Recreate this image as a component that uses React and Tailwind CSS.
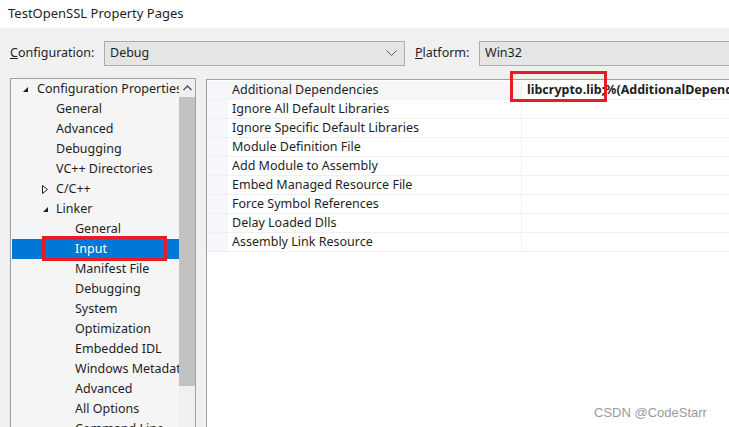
import React from 'react';

const font = { fontFamily: '"Noto Sans", "Noto Sans CJK SC", sans-serif' };

const treeItems = [
  { label: 'Configuration Properties', level: 0, toggle: 'open' },
  { label: 'General', level: 1 },
  { label: 'Advanced', level: 1 },
  { label: 'Debugging', level: 1 },
  { label: 'VC++ Directories', level: 1 },
  { label: 'C/C++', level: 1, toggle: 'closed' },
  { label: 'Linker', level: 1, toggle: 'open' },
  { label: 'General', level: 2 },
  { label: 'Input', level: 2, selected: true },
  { label: 'Manifest File', level: 2 },
  { label: 'Debugging', level: 2 },
  { label: 'System', level: 2 },
  { label: 'Optimization', level: 2 },
  { label: 'Embedded IDL', level: 2 },
  { label: 'Windows Metadata', level: 2 },
  { label: 'Advanced', level: 2 },
  { label: 'All Options', level: 2 },
  { label: 'Command Line', level: 2 },
];

const props = [
  'Additional Dependencies',
  'Ignore All Default Libraries',
  'Ignore Specific Default Libraries',
  'Module Definition File',
  'Add Module to Assembly',
  'Embed Managed Resource File',
  'Force Symbol References',
  'Delay Loaded Dlls',
  'Assembly Link Resource',
];

const textPad = ['pl-[25px]', 'pl-[44px]', 'pl-[63px]'];
const togglePos = ['left-[10px]', 'left-[30px]', 'left-[49px]'];

function Toggle({ kind }) {
  if (kind === 'open') {
    return (
      <svg width="7" height="7" viewBox="0 0 7 7">
        <path d="M6 1 L6 6 L1 6 Z" fill="#1e1e1e" />
      </svg>
    );
  }
  return (
    <svg width="6" height="9" viewBox="0 0 6 9">
      <path d="M0.5 0.5 L5.5 4.5 L0.5 8.5 Z" fill="none" stroke="#1e1e1e" strokeWidth="1" />
    </svg>
  );
}

export default function App() {
  return (
    <div className="relative h-[427px] w-[729px] overflow-hidden bg-[#f0f0f0] text-[12.5px] text-[#1e1e1e]" style={font}>
      {/* Título */}
      <div className="flex h-[28px] items-center bg-white pl-[8px] text-[13px]">TestOpenSSL Property Pages</div>

      {/* Configuração / Plataforma */}
      <div className="mt-[13px] flex h-[25px] items-center">
        <span className="w-[104px] shrink-0 pl-[10px]">
          <u>C</u>onfiguration:
        </span>
        <div className="flex h-[25px] w-[301px] shrink-0 items-center border border-[#adadad] bg-[#e5e5e5] pl-[5px]">
          <span className="flex-1">Debug</span>
          <svg width="11" height="7" viewBox="0 0 11 7" className="mr-[7px]">
            <path d="M0.5 0.5 L5.5 5.5 L10.5 0.5" fill="none" stroke="#5a5a5a" strokeWidth="1" />
          </svg>
        </div>
        <span className="ml-[10px] w-[64px] shrink-0">
          <u>P</u>latform:
        </span>
        <div className="-mr-[2px] flex h-[25px] flex-1 items-center border border-[#adadad] bg-[#e5e5e5] pl-[5px]">
          Win32
        </div>
      </div>

      {/* Conteúdo */}
      <div className="mt-[12px] flex h-[400px] gap-[10px] pl-[10px]">
        {/* Árvore */}
        <div className="flex w-[186px] min-w-0 shrink-0 border border-[#a0a0a0] bg-[#f5f5f5]">
          <div className="min-w-0 flex-1 pl-px">
            {treeItems.map((item, i) => (
              <div
                key={i}
                className={`relative flex h-[20px] items-center overflow-hidden whitespace-nowrap ${textPad[item.level]} ${
                  item.selected ? 'bg-[#0078d7] text-white' : ''
                }`}
              >
                {item.toggle && (
                  <span className={`absolute top-0 flex h-[20px] items-center ${togglePos[item.level]}`}>
                    <Toggle kind={item.toggle} />
                  </span>
                )}
                {item.label}
              </div>
            ))}
          </div>
          <div className="flex w-[16px] shrink-0 flex-col items-center bg-[#f0f0f0]">
            <div className="flex h-[18px] items-center justify-center">
              <svg width="9" height="6" viewBox="0 0 9 6">
                <path d="M0.5 5 L4.5 1 L8.5 5" fill="none" stroke="#555" strokeWidth="1.5" />
              </svg>
            </div>
            <div className="h-[289px] w-[16px] bg-[#c2c2c2]" />
          </div>
        </div>

        {/* Grade de propriedades */}
        <div className="mt-[1px] min-w-0 flex-1 border-l border-t border-[#a0a0a0] bg-white pt-[1px]">
          {props.map((p, i) => (
            <div key={p} className="flex h-[19px] border-b border-[#f0f0f0]">
              <div className="w-[21px] shrink-0 bg-[#f5f7fb]" />
              <div
                className={`flex w-[294px] shrink-0 items-center border-r border-[#f0f0f0] pl-[4px] ${
                  i === 0 ? 'bg-[#f6f6f6]' : ''
                }`}
              >
                {p}
              </div>
              <div className="flex min-w-0 flex-1 items-center overflow-hidden whitespace-nowrap pl-[5px] font-bold">
                {i === 0 ? 'libcrypto.lib;%(AdditionalDependencies)' : ''}
              </div>
            </div>
          ))}
        </div>
      </div>

      {/* Destaques em vermelho */}
      <div className="absolute left-[42px] top-[236px] h-[25px] w-[125px] border-[3px] border-[#e81c24]" />
      <div className="absolute left-[510px] top-[71px] h-[31px] w-[97px] border-[3px] border-[#e81c24]" />

      {/* Marca d'água */}
      <div
        className="absolute left-[594px] top-[403px] text-[13px] text-[#9a9a9a]"
        style={{ fontFamily: '"Liberation Sans", Arial, sans-serif' }}
      >
        CSDN @CodeStarr
      </div>
    </div>
  );
}
